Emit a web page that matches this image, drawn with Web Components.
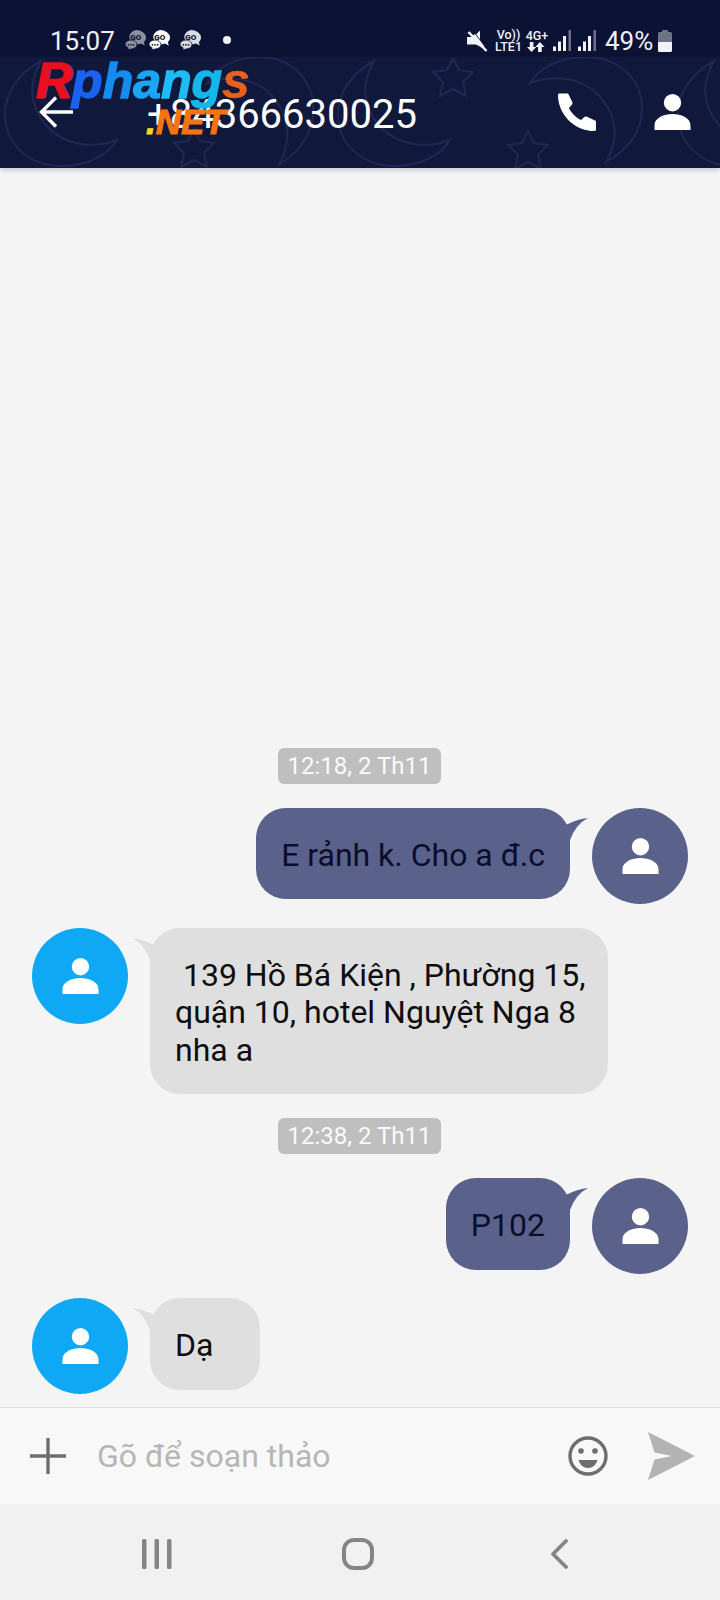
<!DOCTYPE html>
<html lang="vi">
<head>
<meta charset="utf-8">
<title>Tin nhắn</title>
<style>
html,body{margin:0;padding:0;background:#f4f4f5;}
body{width:720px;height:1600px;overflow:hidden;font-family:Roboto,"Noto Sans",sans-serif;}
</style>
</head>
<body>
<x-app>
  <x-status-bar slot="top"></x-status-bar>
  <x-toolbar slot="top" number="+84366630025"></x-toolbar>
  <x-date-pill>12:18, 2 Th11</x-date-pill>
  <x-message kind="out">E rảnh k. Cho a đ.c</x-message>
  <x-message kind="in">&nbsp;139 Hồ Bá Kiện , Phường 15,<br>quận 10, hotel Nguyệt Nga 8<br>nha a</x-message>
  <x-date-pill>12:38, 2 Th11</x-date-pill>
  <x-message kind="out">P102</x-message>
  <x-message kind="in">Dạ</x-message>
  <x-composer slot="bottom"></x-composer>
  <x-nav-bar slot="bottom"></x-nav-bar>
</x-app>
<script>
const PERSON = '<path d="M12 0a5.800 5.800 0 1 1 0 11.600a5.800 5.800 0 1 1 0-11.600zM0 24v-3.200C0 16 6.500 13.400 12 13.400S24 16 24 20.800V24z" fill="currentColor"/>';

function define(name, html, init){
  customElements.define(name, class extends HTMLElement{
    constructor(){
      super();
      this.attachShadow({mode:'open'}).innerHTML = html;
    }
    connectedCallback(){ if(init) init.call(this, this.shadowRoot); }
  });
}

define('x-app', `
<style>
:host{display:flex;flex-direction:column;width:720px;height:1600px;background:#f4f4f5;color:#111;font-family:Roboto,"Noto Sans",sans-serif;}
main{flex:1;min-height:0;display:flex;flex-direction:column;justify-content:flex-end;gap:24px;padding:0 32px 13px;box-sizing:border-box;}
</style>
<slot name="top"></slot>
<main><slot></slot></main>
<slot name="bottom"></slot>`);

define('x-go-icon', `
<style>
:host{display:block;width:22px;height:20px;color:#fff;}
svg{display:block;overflow:visible;}
text{font:900 8px Roboto,sans-serif;fill:#0c1234;}
</style>
<svg width="22" height="20" viewBox="0 0 22 20">
  <path d="M11 0a10 7.600 0 0 1 10 7.400c0 2-.9 3.400-2.200 4.600l1 3.400-3.900-2a11 11 0 0 1-5 .9A10 7.600 0 0 1 11 0z" fill="currentColor"/>
  <text x="5.200" y="10.400">GO</text>
  <path d="M6 10a6 4.600 0 0 1 6 4.600 6 4.600 0 0 1-6 4.400l-3.400 1 .6-2.200A4.600 4.600 0 0 1 0 14.600 6 4.600 0 0 1 6 10z" fill="currentColor" stroke="#0c1234" stroke-width=".8"/>
  <circle cx="3.400" cy="14.800" r=".9" fill="#0c1234"/><circle cx="6" cy="14.800" r=".9" fill="#0c1234"/><circle cx="8.600" cy="14.800" r=".9" fill="#0c1234"/>
</svg>`);

define('x-signal', `
<style>:host{display:block;width:18px;height:21px;}svg{display:block;}</style>
<svg width="18" height="21" viewBox="0 0 18 21">
  <rect x="0" y="16.500" width="3" height="4.500" fill="#f2f3f8"/>
  <rect x="5" y="11.500" width="3" height="9.500" fill="#f2f3f8"/>
  <rect x="10" y="6" width="3" height="15" fill="#f2f3f8"/>
  <rect x="15.500" y="0" width="2.500" height="21" fill="#6b7088"/>
</svg>`);

define('x-status-bar', `
<style>
:host{display:flex;align-items:center;height:57px;box-sizing:border-box;padding:24px 48px 0 50px;background:#0c1234;color:#eef0f6;flex:none;}
.time{font-size:26px;line-height:30px;margin-right:12px;width:63px;white-space:nowrap;}
.go{display:flex;margin-top:-2px;}
.go x-go-icon:nth-child(1){color:#8d909e;}
.go x-go-icon:nth-child(2){margin-left:2px;}
.go x-go-icon:nth-child(3){margin-left:9px;color:#d9dbe2;}
.dot{width:8px;height:8px;border-radius:50%;background:#eef0f6;margin:-2px 0 0 21px;}
.right{margin-left:auto;display:flex;align-items:center;}
.stack{display:flex;flex-direction:column;align-items:center;font-weight:500;font-size:12.500px;line-height:12px;}
.volte{margin-left:7px;width:27px;}
.net{margin-left:4px;width:22px;}
.net svg{display:block;}
x-signal.a{margin-left:5px;}
x-signal.b{margin-left:7px;}
.pct{font-size:26px;line-height:30px;margin-left:9px;width:49px;white-space:nowrap;}
.bat{margin-left:4px;display:block;}
</style>
<div class="time">15:07</div>
<div class="go"><x-go-icon></x-go-icon><x-go-icon></x-go-icon><x-go-icon></x-go-icon></div>
<div class="dot"></div>
<div class="right">
  <svg width="21" height="22" viewBox="0 0 21 22">
    <path d="M0 7h4l4-3 9.500 12.500-2 1.500L9 14.500H0z" fill="#f2f3f8"/>
    <path d="M13 .5v9l-3.800-5.200L12 1.500z" fill="#f2f3f8"/>
    <path d="M1.500 2 19.500 21" stroke="#f2f3f8" stroke-width="2.500"/>
  </svg>
  <div class="stack volte"><span>Vo))</span><span>LTE1</span></div>
  <div class="stack net"><span>4G+</span>
    <svg width="20" height="10" viewBox="0 0 20 10"><path d="M5 10 0 5h3V0h4v5h3zM14 0l5 5h-3v5h-4V5H9z" fill="#f2f3f8" transform="scale(.92 1)"/></svg>
  </div>
  <x-signal class="a"></x-signal>
  <x-signal class="b"></x-signal>
  <div class="pct">49%</div>
  <svg class="bat" width="14" height="22" viewBox="0 0 14 22">
    <path d="M4 0h6v2h2.500A1.500 1.500 0 0 1 14 3.500V12H0V3.500A1.500 1.500 0 0 1 1.500 2H4z" fill="#6f7386"/>
    <path d="M0 12h14v8.500A1.500 1.500 0 0 1 12.500 22h-11A1.500 1.500 0 0 1 0 20.500z" fill="#f2f3f8"/>
  </svg>
</div>`);

define('x-logo', `
<style>
:host{display:block;position:absolute;left:36px;top:3px;width:226px;height:84px;pointer-events:none;font-family:"Liberation Sans",Arial,sans-serif;font-weight:700;font-style:italic;}
.word{position:absolute;left:0;top:-4px;font-size:50px;line-height:50px;white-space:nowrap;-webkit-text-stroke:1.400px currentColor;}
.r{color:#e8101f;text-shadow:2px 0 0 #8b2f8c;}
.p{color:#1a62f0;}
.h{color:#148cf2;}
.a{color:#19a6f5;}
.n{color:#1ebcf7;}
.g{color:#15b6ea;}
.s{color:#e9601c;-webkit-text-stroke:.4px currentColor;}
.net{position:absolute;left:110px;top:44px;font-size:35px;line-height:36px;color:#f47410;white-space:nowrap;-webkit-text-stroke:1px currentColor;}
.net b{color:#f4d820;}
</style>
<div class="word"><span class="r">R</span><span class="p">p</span><span class="h">h</span><span class="a">a</span><span class="n">n</span><span class="g">g</span><span class="s">s</span></div>
<div class="net"><b>.</b>NET</div>`);

define('x-toolbar', `
<style>
:host{display:flex;align-items:center;position:relative;height:111px;box-sizing:border-box;padding:0 29px 2px 39px;background:#10183c;color:#fff;flex:none;box-shadow:0 2px 5px rgba(40,50,90,.22);z-index:1;}
.bg{position:absolute;left:0;top:0;}
.back,.num,.call,.me{position:relative;}
.num{font-size:40px;line-height:48px;margin:6px 0 0 74px;white-space:nowrap;}
.call{margin-left:auto;}
.me{margin-left:58px;}
svg{display:block;}
</style>
<svg class="bg" width="720" height="111" viewBox="0 0 720 111" fill="none" stroke="#1f2850" stroke-width="2">
  <defs>
    <path id="m" d="M0 26C20 18 52 18 72 42C88 62 88 84 76 105C100 92 112 72 112 52C112 20 86 0 56 0C30 0 10 10 0 26z"/>
    <path id="s" d="M20 0l6 12 14 2-10 10 3 14-13-7-13 7 3-14L0 14l14-2z"/>
  </defs>
  <use href="#m" transform="translate(117 109) rotate(180)"/>
  <use href="#m" transform="translate(207 0) scale(.95 1.020)"/>
  <use href="#m" transform="translate(450 109) rotate(180)"/>
  <use href="#m" transform="translate(530 0)"/>
  <use href="#m" transform="translate(790 109) rotate(180)"/>
  <use href="#s" transform="translate(433 1)"/>
  <use href="#s" transform="translate(508 74)"/>
  <use href="#s" transform="translate(174 72)"/>
</svg>
<svg class="back" width="34" height="32" viewBox="0 0 34 32" fill="none" stroke="#fff" stroke-width="3.400"><path d="M34 16H3M17 1.500 2.500 16 17 30.500"/></svg>
<div class="num"></div>
<svg class="call" width="38" height="38" viewBox="0 0 24 24"><path d="M6.400 0.300 9 5.700c.3.600.2 1.200-.2 1.700L6.900 9.500c1.300 3 4.600 6.300 7.600 7.600l2.100-1.900c.5-.4 1.100-.5 1.700-.2l5.400 2.600c.2.100.3.300.3.500v5c0 .5-.4.900-.9.900C10.400 24 0 13.600 0 1.200 0 .7.400.3.900.3h5.500z" fill="currentColor"/></svg>
<svg class="me" width="37" height="36" viewBox="0 0 24 24">${PERSON}</svg>
<x-logo></x-logo>`, function(r){ r.querySelector('.num').textContent = this.getAttribute('number'); });

define('x-date-pill', `
<style>
:host{display:block;align-self:center;height:36px;box-sizing:border-box;padding:0 10px;margin-left:-1px;background:#bfbfbf;border-radius:6px;color:#fafafa;font-size:24px;line-height:36px;white-space:nowrap;}
</style><slot></slot>`);

define('x-avatar', `
<style>
:host{display:flex;align-items:center;justify-content:center;flex:none;width:96px;height:96px;border-radius:50%;color:#fff;background:var(--avatar,#5a618a);}
svg{display:block;}
</style>
<svg width="37" height="36" viewBox="0 0 24 24">${PERSON}</svg>`);

define('x-message', `
<style>
:host{display:flex;align-items:flex-start;font-size:32px;line-height:37.500px;white-space:nowrap;}
:host([kind=out]){flex-direction:row-reverse;--avatar:#5a618a;}
:host([kind=in]){--avatar:#0fa8f5;}
.bubble{position:relative;box-sizing:border-box;padding:29px 25px 25px;border-radius:30px;min-width:110px;max-width:458px;}
:host([kind=out]) .bubble{background:#5a618a;color:#0a0e2a;margin-right:22px;}
:host([kind=in]) .bubble{background:#dfdfdf;color:#0d0d0d;margin-left:22px;}
.tail{position:absolute;top:8px;display:block;}
:host([kind=out]) .tail{right:-18px;color:#5a618a;}
:host([kind=in]) .tail{left:-18px;color:#dfdfdf;transform:scaleX(-1);}
</style>
<x-avatar></x-avatar>
<div class="bubble">
  <svg class="tail" width="30" height="34" viewBox="0 0 30 34"><path d="M0 10Q5 10 10 8Q20 3 30 2Q18 8 12 24L0 34z" fill="currentColor"/></svg>
  <slot></slot>
</div>`);

define('x-composer', `
<style>
:host{display:flex;align-items:center;height:97px;box-sizing:border-box;border-top:1px solid #dcdcdc;background:#f8f8f8;padding:0 25px 0 30px;flex:none;}
svg{display:block;flex:none;}
.ph{font-size:32px;line-height:40px;color:#b6b6b6;margin-left:31px;white-space:nowrap;}
.emoji{margin-left:auto;}
.send{margin-left:40px;}
</style>
<svg width="36" height="36" viewBox="0 0 36 36"><path d="M18 0v36M0 18h36" stroke="#6e6e6e" stroke-width="3.400"/></svg>
<div class="ph">Gõ để soạn thảo</div>
<svg class="emoji" width="40" height="40" viewBox="0 0 40 40">
  <circle cx="20" cy="20" r="18" fill="none" stroke="#6e6e6e" stroke-width="3.400"/>
  <circle cx="13" cy="15" r="2.800" fill="#6e6e6e"/><circle cx="27" cy="15" r="2.800" fill="#6e6e6e"/>
  <path d="M10.500 24h19C28 29 24.500 32 20 32S12 29 10.500 24z" fill="#6e6e6e"/>
</svg>
<svg class="send" width="47" height="48" viewBox="0 0 47 48"><path d="M0 0 47 24 0 48 6.500 27.500 24 24 6.500 20.500z" fill="#b3b3b3"/></svg>`);

define('x-nav-bar', `
<style>
:host{display:flex;align-items:center;height:96px;box-sizing:border-box;padding:3px 152px 0 142px;background:#f1f1f1;flex:none;}
svg{display:block;}
.home{margin-left:170px;}
.back{margin-left:auto;}
</style>
<svg width="30" height="30" viewBox="0 0 30 30" fill="#858585"><rect x="0" width="4.500" height="30" rx="1.500"/><rect x="12.500" width="4.500" height="30" rx="1.500"/><rect x="25" width="4.500" height="30" rx="1.500"/></svg>
<svg class="home" width="32" height="32" viewBox="0 0 32 32"><rect x="2" y="2" width="28" height="28" rx="10" fill="none" stroke="#858585" stroke-width="4"/></svg>
<svg class="back" width="18" height="30" viewBox="0 0 18 30"><path d="M16 2 3 15l13 13" fill="none" stroke="#858585" stroke-width="3.800" stroke-linecap="round" stroke-linejoin="round"/></svg>`);
</script>
</body>
</html>
